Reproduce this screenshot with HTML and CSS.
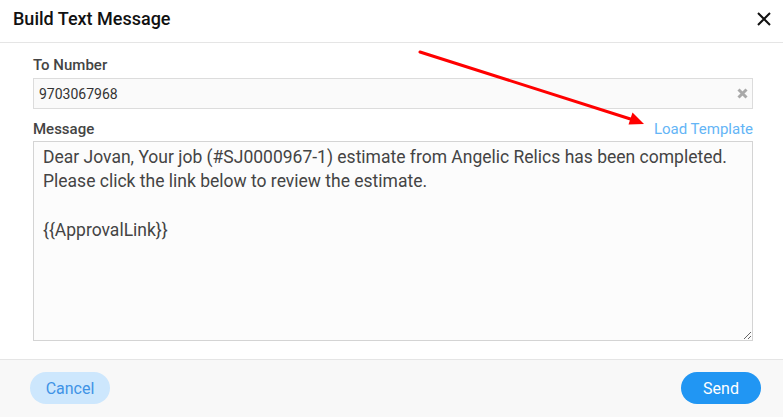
FILE: index.html
```html
<!DOCTYPE html>
<html>
<head>
<meta charset="utf-8">
<link rel="stylesheet" href="styles.css">
</head>
<body>
<div class="modal">
  <div class="header">
    <h1 class="title">Build Text Message</h1>
    <button class="close" aria-label="Close">
      <svg width="14" height="14" viewBox="0 0 14 14"><path d="M1 1L13 13M13 1L1 13" stroke="#111" stroke-width="2" fill="none"/></svg>
    </button>
  </div>
  <div class="body">
    <div class="field-label">To Number</div>
    <div class="input-wrap">
      <input class="input" type="text" value="9703067968">
      <svg class="clear" width="11" height="11" viewBox="0 0 11 11"><path d="M1.5 1.5L9.5 9.5M9.5 1.5L1.5 9.5" stroke="#a9a9a9" stroke-width="3" fill="none"/></svg>
    </div>
    <div class="msg-row">
      <div class="field-label">Message</div>
      <a class="load">Load Template</a>
    </div>
    <textarea class="textarea">Dear Jovan, Your job (#SJ0000967-1) estimate from Angelic Relics has been completed. Please click the link below to review the estimate.

{{ApprovalLink}}</textarea>
  </div>
  <div class="footer">
    <button class="btn cancel">Cancel</button>
    <button class="btn send">Send</button>
  </div>
  <svg class="arrow" width="783" height="140" viewBox="0 0 783 140">
    <line x1="420" y1="52" x2="632" y2="119.5" stroke="#ff0000" stroke-width="3" stroke-linecap="round"/>
    <polygon points="644,124 628.5,124.5 632.5,112.5" fill="#ff0000"/>
  </svg>
</div>
</body>
</html>
```
FILE: styles.css
```css
* { box-sizing: border-box; }
html, body { margin: 0; padding: 0; background: #fff; }
body { font-family: Roboto, "Noto Sans", sans-serif; color: #444; }
.modal { position: relative; width: 783px; height: 417px; display: flex; flex-direction: column; }
.header { height: 43px; border-bottom: 1px solid #e5e5e5; display: flex; align-items: center; justify-content: space-between; padding: 0 12px 0 13px; }
.title { margin: 0; font-size: 18px; font-weight: 500; color: #111; line-height: 24px; padding-bottom: 4px; }
.close { background: none; border: 0; padding: 0; width: 14px; height: 14px; display: flex; margin-bottom: 5px; }
.body { padding: 12px 30px 0 33px; display: flex; flex-direction: column; }
.field-label { font-size: 15px; font-weight: 500; color: #444; line-height: 20px; }
.input-wrap { position: relative; margin-top: 3px; }
.input { width: 100%; height: 31px; border: 1px solid #dcdcdc; background: #fafafa; font-family: inherit; font-size: 14px; color: #333; padding: 0 5px; outline: none; display: block; }
.clear { position: absolute; right: 5px; top: 10px; }
.msg-row { display: flex; justify-content: space-between; align-items: center; margin-top: 10px; }
.load { font-size: 15px; color: #64b5f6; line-height: 20px; cursor: pointer; }
.textarea { margin-top: 2px; width: 100%; height: 200px; border: 1px solid #d4d4d4; background: #fcfcfc; font-family: inherit; font-size: 17.5px; line-height: 24.3px; color: #444; padding: 3px 9px 1px; resize: vertical; outline: none; display: block; }
.footer { margin-top: 18px; border-top: 1px solid #e5e5e5; background: #f8f8f8; flex: 1; display: flex; justify-content: space-between; align-items: flex-start; padding: 12px 22px 0 30px; }
.btn { width: 80px; height: 32px; border: 0; border-radius: 16px; font-family: inherit; font-size: 16px; padding: 0; }
.cancel { background: #cde7fd; color: #3f93e6; }
.send { background: #2196f3; color: #fff; }
.arrow { position: absolute; left: 0; top: 0; pointer-events: none; }
```
